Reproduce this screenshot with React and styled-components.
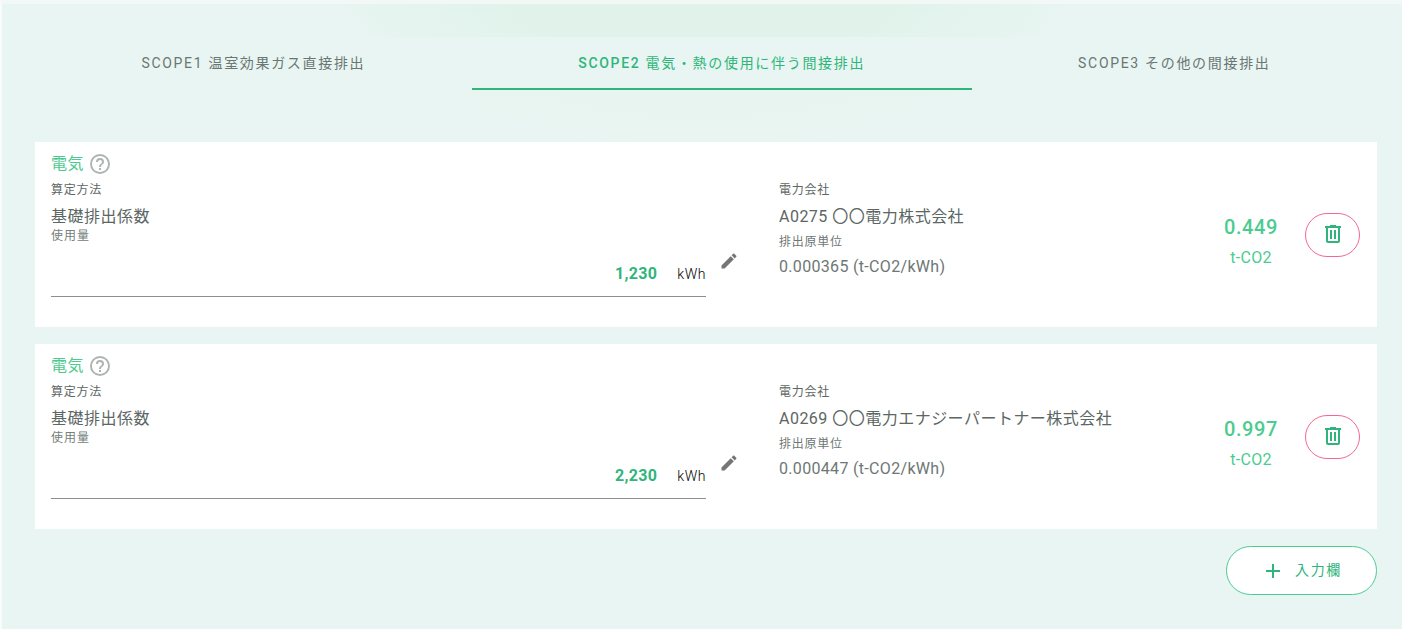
import React, { useState } from 'react';
import styled, { createGlobalStyle } from 'styled-components';

const GlobalStyle = createGlobalStyle`
  *, *::before, *::after {
    box-sizing: border-box;
  }

  body {
    margin: 0;
    background: #e8f5f2;
  }

  body, button, input {
    font-family: Roboto, 'Noto Sans CJK JP', sans-serif;
  }
`;

const Page = styled.main`
  min-height: 100vh;
  padding: 33px 25px 34px 33px;
  border-top: 4px solid #f1f8f6;
  border-left: 2px solid #f8fcfb;
  background:
    radial-gradient(ellipse 370px 100px at 50% 0, #e1f2eb 50%, #e8f5f2) 50% 0 / 740px 33px no-repeat,
    radial-gradient(ellipse 350px 150px at 50% 0, #e7f4ef 70%, #e8f5f2) 50% 0 / 740px 150px no-repeat,
    #e8f5f2;
`;

const Tabs = styled.div`
  display: flex;
  margin-bottom: 52px;
  background: #e8f5f2;
`;

const Tab = styled.button`
  flex: 1 1 auto;
  height: 53px;
  padding: 0 16px 2px;
  border: none;
  border-bottom: 2px solid ${({ $active }) => ($active ? '#2fb57c' : 'transparent')};
  background: none;
  color: ${({ $active }) => ($active ? '#2fb57c' : '#6b7572')};
  font-size: 14px;
  font-weight: 400;
  letter-spacing: 0.12em;
  white-space: nowrap;
  cursor: pointer;
`;

const ScopeName = styled.span`
  font-weight: ${({ $active }) => ($active ? 500 : 400)};
`;

const CardList = styled.div`
  display: flex;
  flex-direction: column;
  gap: 17px;
`;

const Card = styled.section`
  padding: 10px 16px 30px;
  background: #fff;
  display: flex;
`;

const UsageColumn = styled.div`
  flex: 0 0 50%;
`;

const TitleRow = styled.div`
  display: flex;
  align-items: center;
  gap: 4px;
  height: 24px;
`;

const Title = styled.h2`
  margin: 0;
  color: #4ccb90;
  font-size: 16px;
  font-weight: 400;
  line-height: 24px;
  letter-spacing: 0.03em;
`;

const IconButton = styled.button`
  display: flex;
  padding: 0;
  border: none;
  background: none;
  color: ${({ $color }) => $color};
  cursor: pointer;
`;

const Caption = styled.div`
  padding-top: 2px;
  color: #5c6663;
  font-size: 12px;
  line-height: 24px;
  letter-spacing: 0.06em;
`;

const Value = styled.div`
  padding-top: 4px;
  color: #5c6663;
  font-size: 16px;
  line-height: 22px;
  letter-spacing: 0.03em;
`;

const UsageLabel = styled.label`
  display: block;
  color: #75807c;
  font-size: 12px;
  line-height: 16px;
  letter-spacing: 0.08em;
`;

const Field = styled.div`
  display: flex;
  align-items: center;
  gap: 20px;
  padding: 17px 0 11px;
  border-bottom: 1px solid #8c8f8e;
`;

const AmountInput = styled.input`
  flex: 1;
  min-width: 0;
  height: 24px;
  padding: 0;
  border: none;
  outline: none;
  background: none;
  color: #2fb57c;
  font-size: 16px;
  font-weight: 700;
  letter-spacing: 0.02em;
  text-align: right;
`;

const Unit = styled.span`
  padding-top: 2px;
  color: #000;
  font-size: 14px;
  font-weight: 300;
  letter-spacing: 0.04em;
`;

const EditColumn = styled.div`
  flex: 0 0 73px;
  padding: 99px 0 0 13px;
`;

const CompanyColumn = styled.div`
  flex: 1;
  min-width: 0;
  padding-top: 24px;
`;

const UnitCaption = styled(Caption)`
  padding: 2px 0;
  color: #6d7774;
`;

const UnitValue = styled.div`
  color: #6d7774;
  font-size: 16px;
  line-height: 22px;
  letter-spacing: 0.02em;
`;

const Total = styled.div`
  flex: 0 0 108px;
  padding-top: 60px;
  color: #4ccb90;
  text-align: center;
`;

const TotalAmount = styled.div`
  font-size: 20px;
  font-weight: 500;
  line-height: 30px;
  letter-spacing: 0.03em;
`;

const TotalUnit = styled.div`
  font-size: 16px;
  line-height: 32px;
  letter-spacing: 0.02em;
`;

const DeleteButton = styled.button`
  display: flex;
  align-items: center;
  justify-content: center;
  width: 55px;
  height: 44px;
  margin: 61px 1px 0 0;
  padding: 0 0 2px;
  border: 1px solid #f4688f;
  border-radius: 22px;
  background: #fff;
  color: #2fb57c;
  cursor: pointer;
`;

const Actions = styled.div`
  display: flex;
  justify-content: flex-end;
  margin-top: 17px;
`;

const AddButton = styled.button`
  display: flex;
  align-items: center;
  justify-content: center;
  gap: 10px;
  width: 151px;
  height: 49px;
  padding: 0;
  border: 1px solid #4ccb90;
  border-radius: 25px;
  background: #fff;
  color: #2fb57c;
  font-size: 14px;
  line-height: 20px;
  letter-spacing: 0.12em;
  cursor: pointer;
`;

const AddLabel = styled.span`
  padding-bottom: 2px;
`;

const icons = {
  help: 'M11,18H13V16H11V18M12,2A10,10 0 0,0 2,12A10,10 0 0,0 12,22A10,10 0 0,0 22,12A10,10 0 0,0 12,2M12,20C7.59,20 4,16.41 4,12C4,7.59 7.59,4 12,4C16.41,4 20,7.59 20,12C20,16.41 16.41,20 12,20M12,6A4,4 0 0,0 8,10H10A2,2 0 0,1 12,8A2,2 0 0,1 14,10C14,12 11,11.75 11,15H13C13,12.75 16,12.5 16,10A4,4 0 0,0 12,6Z',
  pencil: 'M20.71,7.04C21.1,6.65 21.1,6 20.71,5.63L18.37,3.29C18,2.9 17.35,2.9 16.96,3.29L15.12,5.12L18.87,8.87M3,17.25V21H6.75L17.81,9.93L14.06,6.18L3,17.25Z',
  trash: 'M9,3V4H4V6H5V19A2,2 0 0,0 7,21H17A2,2 0 0,0 19,19V6H20V4H15V3H9M7,6H17V19H7V6M9,8V17H11V8H9M13,8V17H15V8H13Z',
  plus: 'M19,13H13V19H11V13H5V11H11V5H13V11H19V13Z',
};

const Icon = ({ name, size = 24 }) => (
  <svg width={size} height={size} viewBox="0 0 24 24" fill="currentColor" aria-hidden="true">
    <path d={icons[name]} />
  </svg>
);

const tabs = [
  { scope: 'SCOPE1', label: '温室効果ガス直接排出' },
  { scope: 'SCOPE2', label: '電気・熱の使用に伴う間接排出' },
  { scope: 'SCOPE3', label: 'その他の間接排出' },
];

const initialEntries = [
  {
    id: 1,
    amount: '1,230',
    company: 'A0275 〇〇電力株式会社',
    factor: '0.000365 (t-CO2/kWh)',
    total: '0.449',
  },
  {
    id: 2,
    amount: '2,230',
    company: 'A0269 〇〇電力エナジーパートナー株式会社',
    factor: '0.000447 (t-CO2/kWh)',
    total: '0.997',
  },
];

const EntryCard = ({ entry, onDelete }) => {
  const [amount, setAmount] = useState(entry.amount);
  const inputId = `usage-${entry.id}`;

  return (
    <Card>
      <UsageColumn>
        <TitleRow>
          <Title>電気</Title>
          <IconButton type="button" $color="#aeb4b2" aria-label="ヘルプ">
            <Icon name="help" />
          </IconButton>
        </TitleRow>
        <Caption>算定方法</Caption>
        <Value>基礎排出係数</Value>
        <UsageLabel htmlFor={inputId}>使用量</UsageLabel>
        <Field>
          <AmountInput id={inputId} value={amount} onChange={(e) => setAmount(e.target.value)} />
          <Unit>kWh</Unit>
        </Field>
      </UsageColumn>
      <EditColumn>
        <IconButton type="button" $color="#757575" aria-label="編集">
          <Icon name="pencil" size={20} />
        </IconButton>
      </EditColumn>
      <CompanyColumn>
        <Caption>電力会社</Caption>
        <Value>{entry.company}</Value>
        <UnitCaption>排出原単位</UnitCaption>
        <UnitValue>{entry.factor}</UnitValue>
      </CompanyColumn>
      <Total>
        <TotalAmount>{entry.total}</TotalAmount>
        <TotalUnit>t-CO2</TotalUnit>
      </Total>
      <DeleteButton type="button" aria-label="削除" onClick={onDelete}>
        <Icon name="trash" />
      </DeleteButton>
    </Card>
  );
};

const App = () => {
  const [activeTab, setActiveTab] = useState(1);
  const [entries, setEntries] = useState(initialEntries);

  const addEntry = () => {
    setEntries([...entries, { ...initialEntries[0], id: Date.now(), amount: '0', total: '0.000' }]);
  };

  const deleteEntry = (id) => {
    setEntries(entries.filter((entry) => entry.id !== id));
  };

  return (
    <>
      <GlobalStyle />
      <Page>
        <Tabs role="tablist">
          {tabs.map((tab, index) => (
            <Tab
              key={tab.scope}
              type="button"
              role="tab"
              aria-selected={index === activeTab}
              $active={index === activeTab}
              onClick={() => setActiveTab(index)}
            >
              <ScopeName $active={index === activeTab}>{tab.scope}</ScopeName> {tab.label}
            </Tab>
          ))}
        </Tabs>
        <CardList>
          {entries.map((entry) => (
            <EntryCard key={entry.id} entry={entry} onDelete={() => deleteEntry(entry.id)} />
          ))}
        </CardList>
        <Actions>
          <AddButton type="button" onClick={addEntry}>
            <Icon name="plus" />
            <AddLabel>入力欄</AddLabel>
          </AddButton>
        </Actions>
      </Page>
    </>
  );
};

export default App;
